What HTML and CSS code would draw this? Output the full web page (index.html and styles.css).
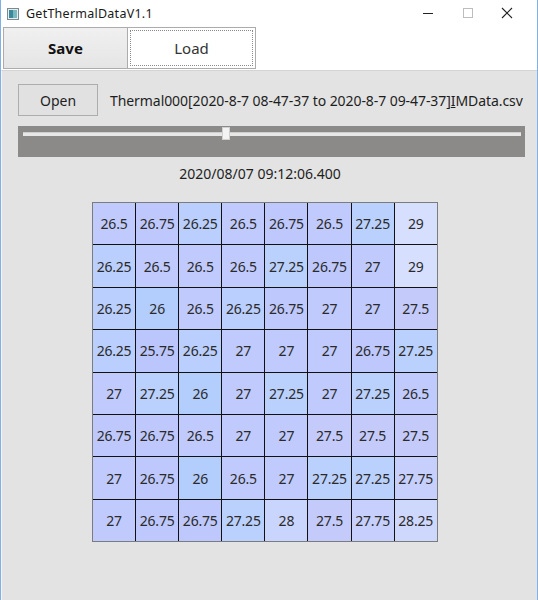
FILE: index.html
```html
<!DOCTYPE html>
<html>
<head>
<meta charset="utf-8">
<link rel="stylesheet" href="styles.css">
</head>
<body>
<div class="window">
  <div class="titlebar">
    <svg class="app-icon" width="12" height="12" viewBox="0 0 12 12">
      <rect x="0.5" y="0.5" width="11" height="11" fill="#e8eef0" stroke="#7a8a90"/>
      <rect x="2" y="2" width="4" height="8" fill="#3a8a9a"/>
      <rect x="6" y="2" width="4" height="8" fill="#7ab8c0"/>
    </svg>
    <span class="title">GetThermalDataV1.1</span>
    <div class="controls">
      <svg class="ctl" width="46" height="26" viewBox="0 0 46 26"><line x1="18" y1="13.5" x2="28" y2="13.5" stroke="#222" stroke-width="1"/></svg>
      <svg class="ctl" width="34" height="26" viewBox="0 0 34 26"><rect x="12.5" y="8.5" width="9" height="9" fill="none" stroke="#bdbdbd" stroke-width="1"/></svg>
      <svg class="ctl" width="46" height="26" viewBox="0 0 46 26"><path d="M17 8 L27 18 M27 8 L17 18" stroke="#222" stroke-width="1.1" fill="none"/></svg>
    </div>
  </div>
  <div class="tabs">
    <div class="tab tab-save">Save</div>
    <div class="tab tab-load"><div class="focus">Load</div></div>
  </div>
  <div class="panel">
    <div class="open-row">
      <div class="btn">Open</div>
      <div class="file">Thermal000[2020-8-7 08-47-37 to 2020-8-7 09-47-37]<u>I</u>MData.csv</div>
    </div>
    <div class="slider">
      <div class="track"></div>
      <div class="thumb"></div>
    </div>
    <div class="date">2020/08/07 09:12:06.400</div>
    <div class="grid">
      <div class="c v265">26.5</div><div class="c v2675">26.75</div><div class="c v2625">26.25</div><div class="c v265">26.5</div><div class="c v2675">26.75</div><div class="c v265">26.5</div><div class="c v2725">27.25</div><div class="c v29">29</div>
      <div class="c v2625">26.25</div><div class="c v265">26.5</div><div class="c v265">26.5</div><div class="c v265">26.5</div><div class="c v2725">27.25</div><div class="c v2675">26.75</div><div class="c v27">27</div><div class="c v29">29</div>
      <div class="c v2625">26.25</div><div class="c v26">26</div><div class="c v265">26.5</div><div class="c v2625">26.25</div><div class="c v2675">26.75</div><div class="c v27">27</div><div class="c v27">27</div><div class="c v275">27.5</div>
      <div class="c v2625">26.25</div><div class="c v2575">25.75</div><div class="c v2625">26.25</div><div class="c v27">27</div><div class="c v27">27</div><div class="c v27">27</div><div class="c v2675">26.75</div><div class="c v2725">27.25</div>
      <div class="c v27">27</div><div class="c v2725">27.25</div><div class="c v26">26</div><div class="c v27">27</div><div class="c v2725">27.25</div><div class="c v27">27</div><div class="c v2725">27.25</div><div class="c v265">26.5</div>
      <div class="c v2675">26.75</div><div class="c v2675">26.75</div><div class="c v265">26.5</div><div class="c v27">27</div><div class="c v27">27</div><div class="c v275">27.5</div><div class="c v275">27.5</div><div class="c v275">27.5</div>
      <div class="c v27">27</div><div class="c v2675">26.75</div><div class="c v26">26</div><div class="c v265">26.5</div><div class="c v27">27</div><div class="c v2725">27.25</div><div class="c v2725">27.25</div><div class="c v2775">27.75</div>
      <div class="c v27">27</div><div class="c v2675">26.75</div><div class="c v2675">26.75</div><div class="c v2725">27.25</div><div class="c v28">28</div><div class="c v275">27.5</div><div class="c v2775">27.75</div><div class="c v2825">28.25</div>
    </div>
  </div>
</div>
</body>
</html>
```

FILE: styles.css
```css
html, body {
  margin: 0;
  padding: 0;
  background: #ffffff;
}
.window {
  width: 538px;
  height: 600px;
  box-sizing: border-box;
  border-left: 1px solid #7fb0ea;
  border-right: 1px solid #7fb0ea;
  display: flex;
  flex-direction: column;
  font-family: "Noto Sans", "Open Sans", sans-serif;
  color: #1e1e1e;
  overflow: hidden;
}
.titlebar {
  height: 26px;
  display: flex;
  align-items: center;
  background: #ffffff;
  flex: none;
}
.app-icon {
  margin-left: 6px;
  margin-top: 1px;
}
.title {
  margin-left: 7px;
  font-size: 12.5px;
  letter-spacing: 0.25px;
  color: #1a1a1a;
}
.controls {
  margin-left: auto;
  display: flex;
  margin-right: 6px;
}
.ctl {
  display: block;
}
.tabs {
  height: 44px;
  flex: none;
  display: flex;
  align-items: flex-start;
  background: #ffffff;
  box-sizing: border-box;
  padding-top: 1px;
  padding-left: 2px;
}
.tab {
  height: 42px;
  box-sizing: border-box;
  border: 1px solid #acacac;
  display: flex;
  align-items: center;
  justify-content: center;
  font-size: 15px;
}
.tab-save {
  width: 125px;
  background: linear-gradient(#f0f0f0, #e5e5e5);
  font-weight: bold;
  color: #111;
}
.tab-load {
  width: 129px;
  margin-left: -1px;
  background: #ffffff;
  padding: 2px;
  color: #333;
}
.focus {
  width: 100%;
  height: 100%;
  box-sizing: border-box;
  border: 1px dotted #8a8a8a;
  display: flex;
  align-items: center;
  justify-content: center;
}
.panel {
  flex: 1;
  background: #e3e3e3;
  border-top: 1px solid #d4d4d4;
  border-left: 1px solid #f4f4f4;
  padding: 13px 0 0 16px;
}
.open-row {
  display: flex;
  align-items: center;
  height: 32px;
}
.btn {
  width: 80px;
  height: 32px;
  box-sizing: border-box;
  border: 1px solid #adadad;
  background: #e1e1e1;
  display: flex;
  align-items: center;
  justify-content: center;
  font-size: 14px;
  color: #1e1e1e;
}
.file {
  margin-left: 12px;
  font-size: 14px;
  letter-spacing: -0.07px;
  white-space: nowrap;
  color: #1e1e1e;
}
.file u {
  text-decoration-thickness: 1px;
}
.slider {
  position: relative;
  margin-top: 10px;
  width: 507px;
  height: 31px;
  background: #8b8a88;
}
.track {
  position: absolute;
  left: 5px;
  right: 4px;
  top: 6px;
  height: 3px;
  background: #e7e7e7;
  border-top: 1px solid #cfcfcf;
}
.thumb {
  position: absolute;
  left: 204px;
  top: 1px;
  width: 8px;
  height: 13px;
  box-sizing: border-box;
  background: #f3f3f3;
  border: 1px solid #d0d0d0;
}
.date {
  width: 484px;
  margin-top: 7px;
  height: 20px;
  line-height: 20px;
  text-align: center;
  font-size: 14px;
  color: #1e1e1e;
}
.grid {
  margin-top: 18px;
  margin-left: 74px;
  display: grid;
  grid-template-columns: repeat(8, 42.1px);
  grid-template-rows: repeat(8, 41.4px);
  gap: 1px;
  background: #111111;
  border: 1px solid #7c7c7c;
  width: max-content;
}
.c {
  display: flex;
  align-items: center;
  justify-content: center;
  font-size: 14px;
  color: #2a2a2a;
  letter-spacing: -0.2px;
}
.v2575 { background: #bbc6fc; }
.v26   { background: #b3cdfd; }
.v2625 { background: #bacffd; }
.v265  { background: #c1cafd; }
.v2675 { background: #bec8fc; }
.v27   { background: #c0cafd; }
.v2725 { background: #bbd1fd; }
.v275  { background: #c4cbfb; }
.v2775 { background: #c7d0fd; }
.v28   { background: #cad5fd; }
.v2825 { background: #ced8fd; }
.v29   { background: #d7dffe; }
```
